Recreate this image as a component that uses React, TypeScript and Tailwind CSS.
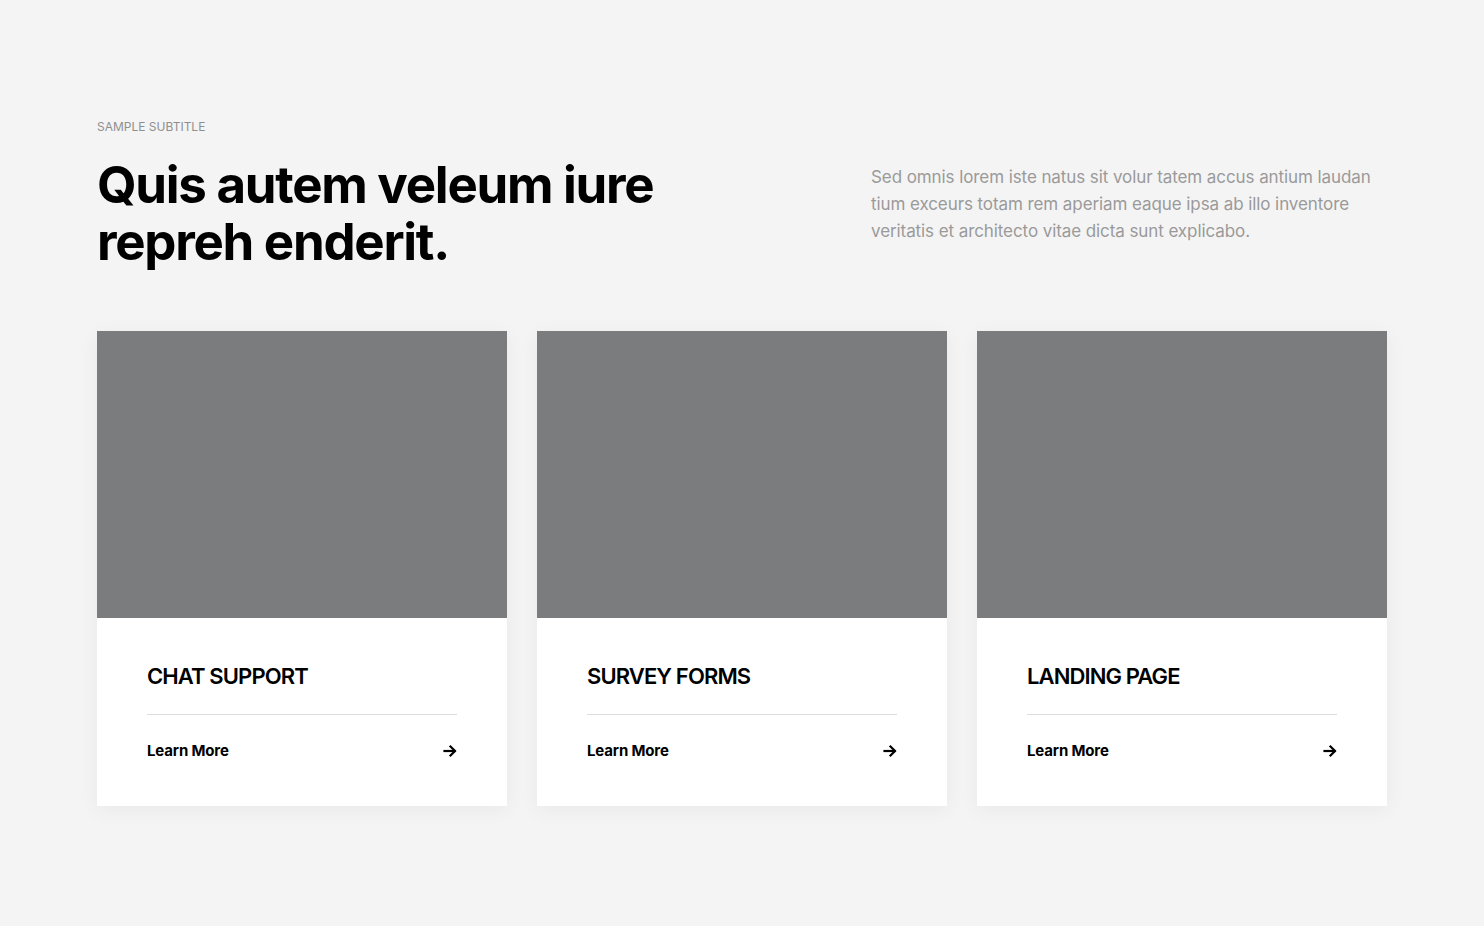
import React from "react";

const cards = ["CHAT SUPPORT", "SURVEY FORMS", "LANDING PAGE"];

function Arrow() {
  return (
    <svg width="14" height="14" viewBox="0 0 14 14" fill="none" stroke="#000" strokeWidth="2.2" strokeLinecap="square">
      <path d="M1.5 7h10" />
      <path d="M7.5 2.5L12 7l-4.5 4.5" />
    </svg>
  );
}

export default function App() {
  return (
    <div className="min-h-[926px] w-full bg-[#f4f4f4] font-['Inter',sans-serif]">
      <div className="mx-auto w-[1290px] pt-[120px]">
        <div className="flex justify-between">
          <div>
            <div className="text-[12px] leading-[14px] uppercase tracking-[0em] text-[#8f8f8f]">Sample Subtitle</div>
            <h1 className="mt-[22px] text-[51px] leading-[57px] font-bold tracking-[-0.025em] text-black">
              Quis autem veleum iure
              <br />
              repreh enderit.
            </h1>
          </div>
          <p className="mt-[44px] w-[516px] text-[17px] leading-[27px] tracking-[-0.005em] text-[#9a9a9a]">
            Sed omnis lorem iste natus sit volur tatem accus antium laudan
            <br />
            tium exceurs totam rem aperiam eaque ipsa ab illo inventore
            <br />
            veritatis et architecto vitae dicta sunt explicabo.
          </p>
        </div>
        <div className="mt-[61px] grid grid-cols-3 gap-[30px]">
          {cards.map((c) => (
            <div key={c} className="bg-white shadow-[0_4px_20px_rgba(0,0,0,0.05)]">
              <div className="h-[287px] bg-[#7b7c7d]" />
              <div className="px-[50px] pt-[44px] pb-[44px]">
                <div className="text-[22px] leading-[28px] font-semibold tracking-[-0.04em] text-black">{c}</div>
                <div className="mt-[24px] h-px bg-[#dddddd]" />
                <div className="mt-[25px] flex items-center justify-between">
                  <span className="text-[15px] leading-[22px] font-bold tracking-[-0.01em] text-black">Learn More</span>
                  <Arrow />
                </div>
              </div>
            </div>
          ))}
        </div>
      </div>
    </div>
  );
}
